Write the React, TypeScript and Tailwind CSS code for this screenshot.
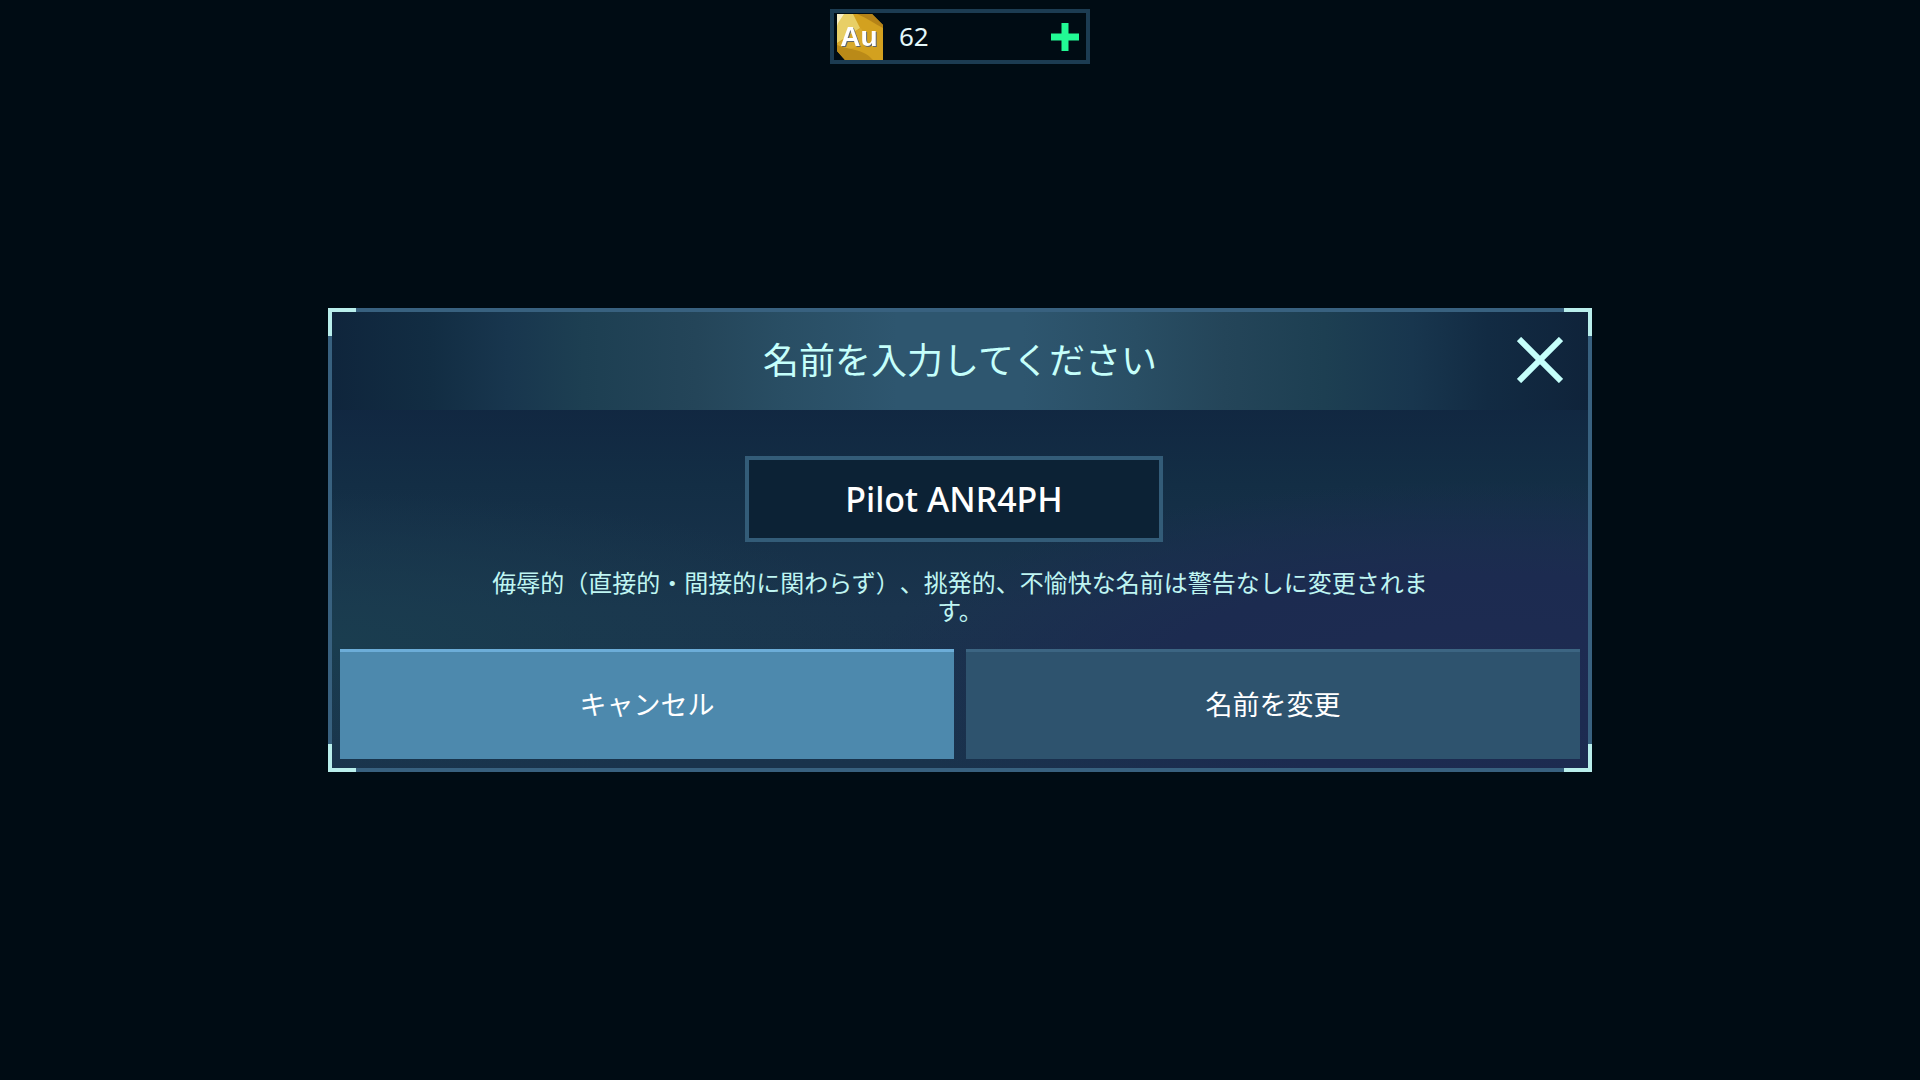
import { useState } from "react";

const corners = [
  "-top-1 -left-1 border-t-4 border-l-4",
  "-top-1 -right-1 border-t-4 border-r-4",
  "-bottom-1 -left-1 border-b-4 border-l-4",
  "-bottom-1 -right-1 border-b-4 border-r-4",
];

function GoldIcon() {
  return (
    <span className="relative flex size-[46px] items-center justify-center">
      <svg viewBox="0 0 46 46" className="absolute inset-0 size-full" aria-hidden="true">
        <path d="M0 0H35L46 11V46H8L0 37Z" fill="#d3a11f" />
        <path d="M0 30L24 14L31 30L8 36Z" fill="#d8aa2e" />
        <path d="M0 0H16L23 14L0 29Z" fill="#e8cf66" />
        <path d="M0 0H7L1 9L0 12Z" fill="#f8efc4" />
        <path d="M20 0H35L46 11V14C38 10 30 4 20 0Z" fill="#b58318" />
        <path d="M0 31C10 36 26 34 36 46H8L0 37Z" fill="#ba8a18" />
      </svg>
      <span className="relative pr-0.5 font-['Liberation_Sans',sans-serif] text-[28px] leading-none font-bold text-white drop-shadow-[1px_1px_0_#5f6468]">
        Au
      </span>
    </span>
  );
}

function CurrencyBar({ amount }: { amount: number }) {
  return (
    <div className="mt-[9px] flex h-[55px] w-[260px] items-center justify-between border-4 border-[#1c3c52] bg-[#000c14] pr-[7px] pl-[3px]">
      <div className="flex items-center gap-4">
        <GoldIcon />
        <span className="pb-0.5 text-[26px] leading-none text-[#e4f8fa]">{amount}</span>
      </div>
      <button type="button" aria-label="Auを追加" className="cursor-pointer">
        <svg viewBox="0 0 28 28" className="size-7" aria-hidden="true">
          <path d="M14 0V28M0 14H28" stroke="#22fa94" strokeWidth="7" />
        </svg>
      </button>
    </div>
  );
}

export default function App() {
  const [name, setName] = useState("Pilot ANR4PH");

  return (
    <main
      lang="ja"
      className="grid min-h-screen grid-rows-[1fr_auto_1fr] justify-items-center bg-[#000c14] font-['Noto_Sans','Noto_Sans_CJK_JP',sans-serif]"
    >
      <CurrencyBar amount={62} />

      <form
        role="dialog"
        aria-labelledby="rename-title"
        onSubmit={(e) => e.preventDefault()}
        className="relative w-full max-w-[1264px] self-center border-4 border-[#38617f] bg-[radial-gradient(ellipse_at_92%_80%,#1e2b52_0%,#1c2b50_20%,transparent_38%),radial-gradient(ellipse_at_0%_72%,#1a3d4f_0%,transparent_32%),linear-gradient(to_bottom,#112741_20%,#132e45_38%,#1a344d_65%,#19334c_100%)]"
      >
        {corners.map((corner) => (
          <span key={corner} className={`pointer-events-none absolute size-7 border-[#b9efec] ${corner}`} />
        ))}

        <header className="grid h-[98px] grid-cols-[1fr_auto_1fr] items-center bg-[linear-gradient(to_right,#0f253c_0%,#122d43_8%,#18364e_14%,#1d3f52_20%,#244559_29%,#294e64_36%,#2e566f_45%,#2e566f_55%,#294e64_64%,#244559_71%,#1d3f52_79%,#18364e_86%,#122b43_92%,#0f233a_100%)] px-[25px] pb-0.5">
          <h1
            id="rename-title"
            className="col-start-2 pb-1 font-['Noto_Sans_CJK_JP',sans-serif] text-[36px] leading-none text-[#c5fffb]"
          >
            名前を入力してください
          </h1>
          <button type="button" aria-label="閉じる" className="cursor-pointer justify-self-end">
            <svg viewBox="0 0 46 46" className="size-[46px]" aria-hidden="true">
              <path d="M2 2L44 44M44 2L2 44" stroke="#c5fffb" strokeWidth="6" />
            </svg>
          </button>
        </header>

        <div className="mt-[46px] flex justify-center pr-3">
          <input
            type="text"
            aria-label="名前"
            value={name}
            onChange={(e) => setName(e.target.value)}
            className="h-[86px] w-[418px] border-4 border-[#335c78] bg-[#0c2235] text-center text-[34px] font-medium text-white outline-none"
          />
        </div>

        <p className="mx-auto mt-[26px] max-w-[944px] text-center font-['Noto_Sans_CJK_JP',sans-serif] text-[24px] leading-7 text-[#bff5f2] [text-spacing-trim:space-all]">
          侮辱的（直接的・間接的に関わらず）、挑発的、不愉快な名前は警告なしに変更されます。
        </p>

        <div className="mt-[25px] grid grid-cols-2 gap-3 px-2 pb-[9px] font-['Noto_Sans_CJK_JP',sans-serif] text-[27px] text-white">
          <button type="button" className="h-[110px] cursor-pointer border-t-3 border-[#6cadd8] bg-[#4d89ad] pb-0.5">
            キャンセル
          </button>
          <button type="submit" className="h-[110px] cursor-pointer border-t-3 border-[#3c6582] bg-[#2e536e] pb-0.5">
            名前を変更
          </button>
        </div>
      </form>
    </main>
  );
}
